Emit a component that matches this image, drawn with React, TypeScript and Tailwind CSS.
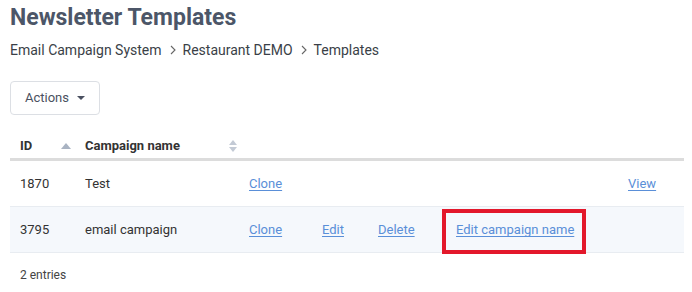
import React from "react";

function SortUp() {
  return (
    <svg width="10" height="6" viewBox="0 0 10 6" className="inline-block">
      <path d="M0 6 L5 0 L10 6 Z" fill="#a9b3c2" />
    </svg>
  );
}

function SortBoth() {
  return (
    <svg width="10" height="14" viewBox="0 0 10 14" className="inline-block">
      <path d="M1 6 L5 1 L9 6 Z" fill="#c3cad5" />
      <path d="M1 8 L5 13 L9 8 Z" fill="#c3cad5" />
    </svg>
  );
}

function Chevron() {
  return (
    <svg width="6" height="10" viewBox="0 0 6 10" className="ml-[8px] mr-[7px]">
      <path d="M1 1 L5 5 L1 9" fill="none" stroke="#666" strokeWidth="1.1" />
    </svg>
  );
}

const link = "text-[#5a8fd8] underline underline-offset-2";
const row = "grid grid-cols-[65px_164px_73px_56px_78px_172px_66px] items-center";

export default function App() {
  return (
    <div className="w-[692px] h-[292px] bg-white px-[10px] pt-[2px]" style={{ fontFamily: "Roboto, 'Liberation Sans', sans-serif" }}>
      <h1 className="text-[23px] leading-[32px] font-bold text-[#4c5668]">Newsletter Templates</h1>
      <div className="mt-[4px] flex items-center text-[14px] leading-[24px] text-[#3a3f47]">
        <span>Email Campaign System</span>
        <Chevron />
        <span>Restaurant DEMO</span>
        <Chevron />
        <span>Templates</span>
      </div>
      <div className="mt-[19px]">
        <button className="h-[34px] w-[90px] rounded-[4px] border border-[#dcdfe4] bg-white flex items-center justify-center gap-[8px] text-[13px] text-[#4a5060]">
          Actions
          <svg width="8" height="4" viewBox="0 0 8 4"><path d="M0 0 L8 0 L4 4 Z" fill="#4a5060" /></svg>
        </button>
      </div>
      <div className="mt-[12px] w-[674px] text-[13px] text-[#333]">
        <div className={`${row} h-[34px] pt-[7px] border-b-[3px] border-[#dcdcdc] font-bold`}>
          <div className="pl-[10px] pr-[4px] flex items-center justify-between">
            <span>ID</span>
            <SortUp />
          </div>
          <div className="pl-[10px] pr-[1px] flex items-center justify-between">
            <span>Campaign name</span>
            <SortBoth />
          </div>
        </div>
        <div className={`${row} h-[46px] border-b border-[#e8ecf1]`}>
          <div className="pl-[10px]">1870</div>
          <div className="pl-[10px]">Test</div>
          <div className="pl-[10px]"><a className={link}>Clone</a></div>
          <div></div>
          <div></div>
          <div></div>
          <div className="pl-[10px]"><a className={link}>View</a></div>
        </div>
        <div className={`${row} h-[46px] border-b border-[#e8ecf1] bg-[#f5f8fc]`}>
          <div className="pl-[10px] pt-[1px]">3795</div>
          <div className="pl-[10px] pt-[1px]">email campaign</div>
          <div className="pl-[10px] pt-[1px]"><a className={link}>Clone</a></div>
          <div className="pl-[10px] pt-[1px]"><a className={link}>Edit</a></div>
          <div className="pl-[10px] pt-[1px]"><a className={link}>Delete</a></div>
          <div className="pl-[10px] pt-[1px] relative self-stretch flex items-center">
            <a className={link}>Edit campaign name</a>
            <div className="absolute left-[-4px] top-[2px] w-[144px] h-[45px] border-[4px] border-[#e3182b]"></div>
          </div>
          <div></div>
        </div>
      </div>
      <div className="mt-[14px] pl-[10px] text-[12px] leading-[16px] text-[#444]">2 entries</div>
    </div>
  );
}
